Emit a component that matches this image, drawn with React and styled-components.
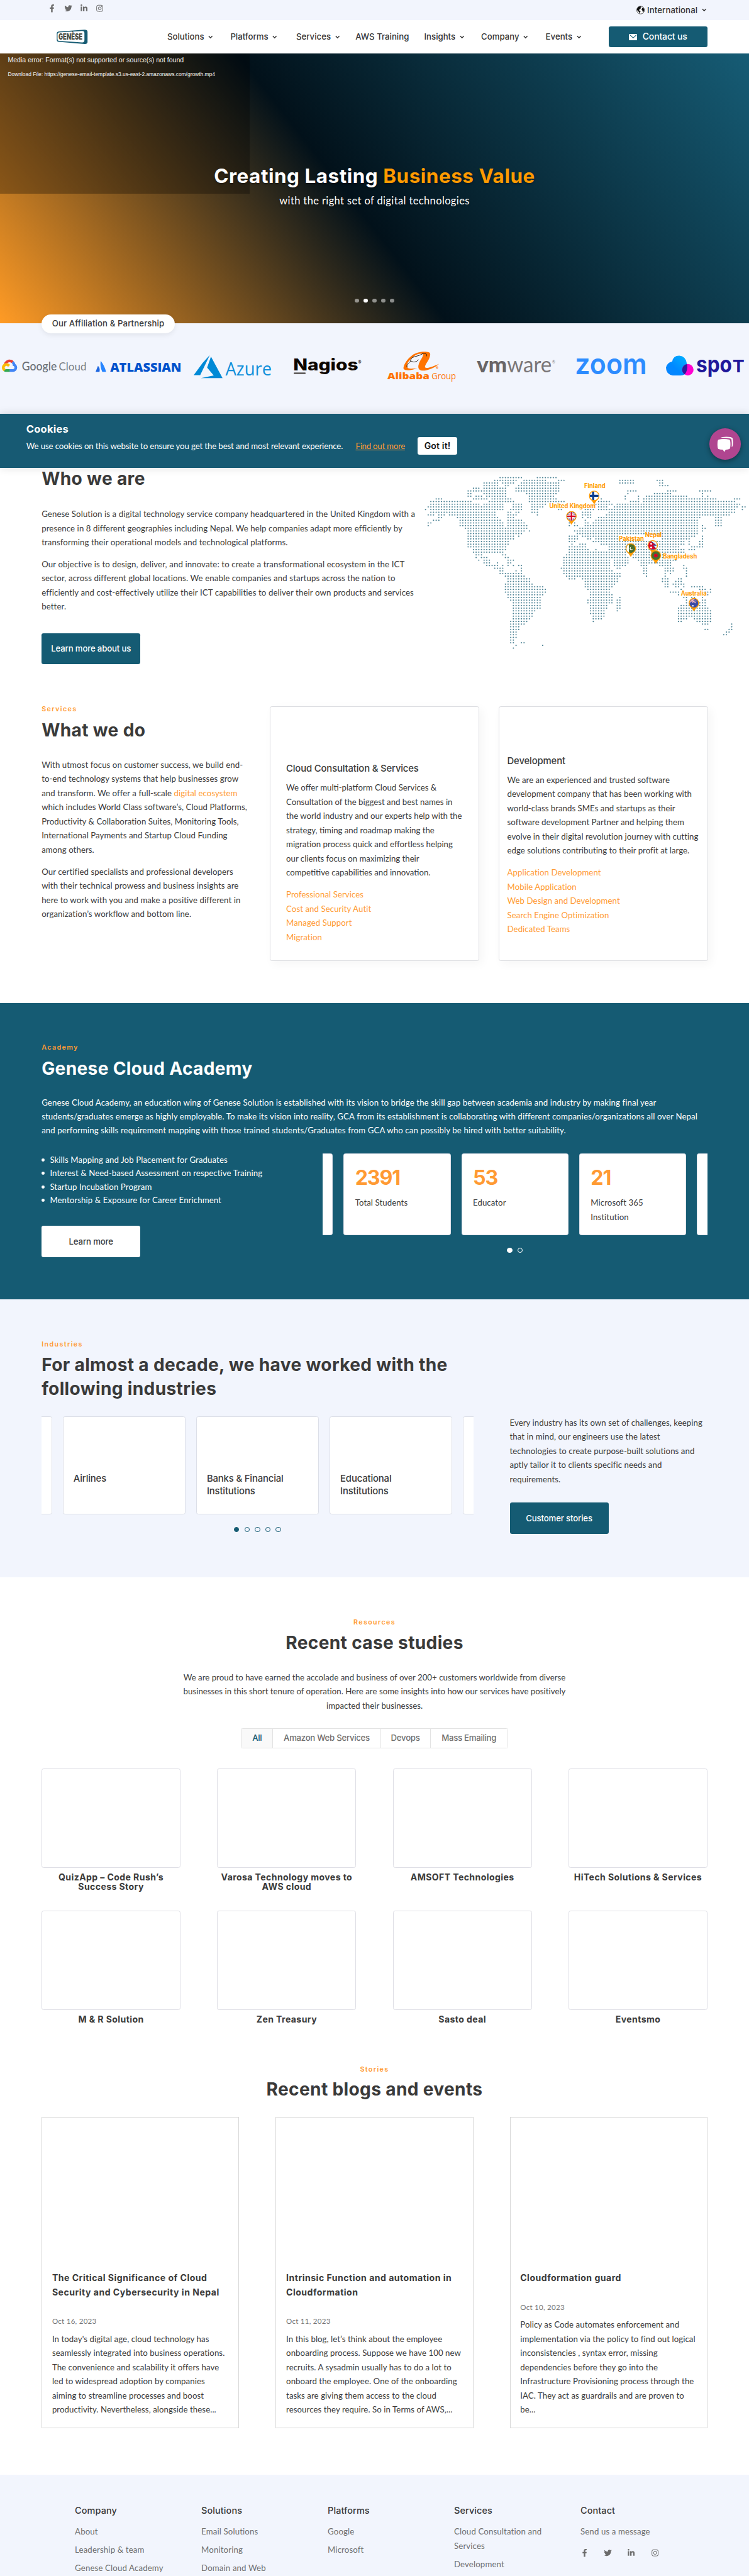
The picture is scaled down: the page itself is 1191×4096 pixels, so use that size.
import React from "react";
import styled, { createGlobalStyle, css } from "styled-components";
import { FaFacebookF, FaTwitter, FaLinkedinIn, FaInstagram } from "react-icons/fa";

const teal = "#155b73";
const orange = "#ff9a33";
const ink = "#3a3a3a";
const grey = "#6f6f6f";
const mist = "#f2f5fd";
const display = `Inter, "Liberation Sans", sans-serif`;
const text = `Lato, "Liberation Sans", sans-serif`;
const humanist = `"Open Sans", "Liberation Sans", sans-serif`;

/* 1rem is ten units of the 1440-unit wide design */
const GlobalStyle = createGlobalStyle`
  html { font-size: calc(100vw / 144); }
  *, *::before, *::after { box-sizing: border-box; }
  body { margin: 0; background: #fff; color: ${ink}; font-family: ${text}; overflow-x: hidden; }
  h1, h2, h3, p, ul { margin: 0; padding: 0; }
  ul { list-style: none; }
  svg { display: block; }
`;

const Page = styled.div`
  width: 144rem;
  height: 495.2rem;
  overflow: hidden;
`;

/* ---------- shared type ---------- */
const Body = styled.p`
  margin-top: ${(p) => p.$mt || 0}rem;
  font-size: 1.6rem;
  line-height: ${(p) => p.$lh || 2.72}rem;
  letter-spacing: ${(p) => p.$ls ?? 0.009}rem;
  white-space: pre;
  color: ${(p) => p.$color || ink};
  text-align: ${(p) => p.$align || "left"};
`;
const Accent = styled.span`
  color: ${orange};
`;
const Eyebrow = styled.div`
  font: 600 1.3rem/2rem ${display};
  letter-spacing: 0.165rem;
  color: ${orange};
`;
const Heading = styled.h2`
  margin-top: ${(p) => p.$mt || 0}rem;
  font: 700 3.4rem / ${(p) => p.$lh || 4.3}rem ${display};
  letter-spacing: 0.04rem;
  white-space: pre;
  color: ${(p) => p.$color || ink};
`;
const SubHeading = styled.h3`
  font: 500 1.8rem/2.4rem ${display};
  letter-spacing: -0.02rem;
  white-space: pre;
`;
const Button = styled.a`
  display: flex;
  align-items: center;
  justify-content: center;
  width: 19rem;
  height: 6rem;
  margin-top: ${(p) => p.$mt || 0}rem;
  border-radius: 0.4rem;
  font: 500 1.6rem/2rem ${display};
  letter-spacing: -0.02rem;
  ${(p) =>
    p.$light
      ? css`
          background: #fff;
          color: ${ink};
        `
      : css`
          background: ${teal};
          color: #fff;
        `}
`;

/* ---------- header ---------- */
const TopBar = styled.div`
  display: flex;
  justify-content: space-between;
  align-items: center;
  height: 3.9rem;
  padding: 0 8.2rem 0 9.3rem;
  background: ${mist};
`;
const Socials = styled.div`
  display: flex;
  gap: ${(p) => p.$gap}rem;
  margin: ${(p) => p.$margin};
  color: #6b6b6b;
  svg {
    width: 1.6rem;
    height: 1.5rem;
  }
`;
const Region = styled.div`
  display: flex;
  align-items: center;
  font: 500 1.6rem/2rem ${display};
  gap: 0.5rem;
  letter-spacing: 0.01rem;
  color: #333;
`;
const GlobeSvg = styled.svg`
  width: 1.6rem;
  height: 1.7rem;
`;
const Chevron = styled.svg`
  width: 0.9rem;
  height: 0.7rem;
  margin-left: ${(p) => p.$ml || 0.8}rem;
`;
const NavBar = styled.header`
  display: flex;
  align-items: center;
  height: 6.4rem;
  padding: 0 8rem 0 10.9rem;
  background: #fff;
`;
const BrandSvg = styled.svg`
  width: 6rem;
  height: 2.8rem;
  overflow: visible;
`;
const Nav = styled.nav`
  display: grid;
  grid-template-columns: 12.15rem 12.65rem 11.4rem 13.2rem 10.95rem 12.4rem auto;
  margin-left: 15.25rem;
`;
const NavLink = styled.a`
  display: flex;
  align-items: center;
  font: 500 1.6rem/2.4rem ${display};
  color: #353535;
`;
const ContactLink = styled.a`
  display: flex;
  align-items: center;
  justify-content: center;
  gap: 1rem;
  width: 19rem;
  height: 4rem;
  margin-left: auto;
  border-radius: 0.4rem;
  background: ${teal};
  color: #fff;
  font: 500 1.7rem/2rem ${display};
  letter-spacing: -0.02rem;
  svg {
    width: 1.65rem;
    height: 1.25rem;
  }
`;

/* ---------- hero ---------- */
const Hero = styled.section`
  position: relative;
  display: flex;
  flex-direction: column;
  align-items: center;
  height: 51.9rem;
  padding-top: 21.2rem;
  background: linear-gradient(52deg, #ff9b25 0%, #02111a 46.7%, #165c75 100%);
  color: #fff;
`;
const VideoError = styled.div`
  position: absolute;
  top: 0;
  left: 0;
  width: 48rem;
  height: 27rem;
  padding: 0.27rem 1.5rem;
  background: rgba(0, 0, 0, 0.3);
  font-family: "Liberation Sans", Arial, sans-serif;
  white-space: pre;
`;
const ErrorLine = styled.p`
  font-size: ${(p) => p.$size}rem;
  line-height: 2rem;
  margin-bottom: 0.77rem;
  color: #f4f4f4;
`;
const HeroTitle = styled.h1`
  position: relative;
  font: 700 3.8rem/4.6rem ${display};
  letter-spacing: 0.066rem;
  text-shadow: 0 0.2rem 0.4rem rgba(0, 0, 0, 0.3);
  em {
    font-style: normal;
    color: #ff9a00;
  }
`;
const HeroText = styled.p`
  margin-top: 1.18rem;
  font-size: 2rem;
  line-height: 2.7rem;
  letter-spacing: 0.044rem;
  text-shadow: 0 0.2rem 0.4rem rgba(0, 0, 0, 0.3);
`;
const HeroDots = styled.div`
  display: flex;
  gap: 0.95rem;
  margin-top: 17.4rem;
`;
const HeroDot = styled.span`
  width: 0.75rem;
  height: 0.75rem;
  border-radius: 50%;
  background: ${(p) => (p.$on ? "#fff" : "rgba(255,255,255,.5)")};
`;

/* ---------- partners ---------- */
const Partners = styled.section`
  height: 17.4rem;
  background: ${mist};
`;
const Pill = styled.div`
  position: relative;
  top: -1.8rem;
  width: 25.6rem;
  height: 3.7rem;
  margin-left: 8rem;
  border-radius: 1.85rem;
  background: #fff;
  box-shadow: 0 0.3rem 1rem rgba(0, 0, 0, 0.08);
  font: 500 1.6rem/3.5rem ${display};
  letter-spacing: 0.012rem;
  text-align: center;
`;
const LogoRow = styled.div`
  display: grid;
  grid-template-columns: 18rem 18.9rem 19.2rem 18rem 17.3rem 18.9rem 17.3rem 16rem;
  margin: 1.1rem 0 0 0.4rem;
`;
const LogoSvg = styled.svg`
  width: 100%;
  height: 8rem;
  overflow: visible;
`;

/* ---------- cookie bar ---------- */
const CookieBar = styled.aside`
  position: relative;
  height: 10.4rem;
  padding: 1.57rem 5.05rem;
  background: #175a73;
  color: #fff;
  box-shadow: 0 0 1.6rem rgba(0, 0, 0, 0.13);
`;
const CookieTitle = styled.h3`
  font: 700 2rem/2.8rem ${display};
  letter-spacing: 0.026rem;
`;
const CookieRow = styled.div`
  display: flex;
  align-items: center;
  margin-top: 0.1rem;
  font-size: 1.6rem;
  letter-spacing: -0.014rem;
  line-height: 3.2rem;
`;
const CookieLink = styled.a`
  margin: 0 2.45rem;
  color: ${orange};
  text-decoration: underline;
  letter-spacing: -0.03rem;
`;
const CookieButton = styled.button`
  width: 7.6rem;
  height: 3.4rem;
  padding: 0;
  border: 0;
  border-radius: 0.4rem;
  background: #fff;
  color: #111;
  font: 600 1.7rem/3.4rem ${display};
  letter-spacing: 0.02rem;
`;
const ChatButton = styled.div`
  position: absolute;
  top: 2.8rem;
  right: 1.6rem;
  display: grid;
  place-items: center;
  width: 6rem;
  height: 6rem;
  border-radius: 50%;
  background: #b04590;
  box-shadow: 0 0.3rem 1rem rgba(0, 0, 0, 0.4);
  svg {
    width: 3.2rem;
    height: 3rem;
  }
`;

/* ---------- who we are ---------- */
const Who = styled.section`
  display: flex;
  justify-content: space-between;
  height: 45.4rem;
  padding-left: 8rem;
`;
const MapSvg = styled.svg`
  width: 63rem;
  height: 36rem;
`;

/* ---------- services ---------- */
const Services = styled.section`
  display: grid;
  grid-template-columns: 43.9rem 44rem 40.1rem;
  align-items: start;
  height: 57.4rem;
  padding: 0 8rem;
`;
const ServiceCard = styled.article`
  width: 40.2rem;
  height: 49rem;
  margin-top: 0.35rem;
  padding: ${(p) => p.$pad};
  border: 1px solid #dcdde1;
  border-radius: 0.4rem;
  background: #fff;
  box-shadow: 0.6rem 0.6rem 1.8rem rgba(0, 0, 0, 0.04);
`;

/* ---------- carousels ---------- */
const Track = styled.div`
  display: flex;
  justify-content: center;
  gap: 2.05rem;
  width: ${(p) => p.$w}rem;
  overflow: hidden;
`;
const Slide = styled.div`
  flex: none;
  width: ${(p) => p.$w}rem;
  height: ${(p) => p.$h}rem;
  padding: ${(p) => p.$pad};
  border: 1px solid #dcdfe8;
  border-radius: 0.4rem;
  background: #fff;
  color: ${ink};
`;
const Count = styled.div`
  font: 700 3.9rem/4.6rem ${display};
  letter-spacing: -0.14rem;
  color: ${orange};
`;
const Pager = styled.div`
  display: flex;
  justify-content: center;
  gap: 1rem;
  margin-top: 2.4rem;
`;
const PagerDot = styled.span`
  width: 1rem;
  height: 1rem;
  border: 1px solid ${(p) => p.$c};
  border-radius: 50%;
  background: ${(p) => (p.$on ? p.$c : "transparent")};
`;

/* ---------- academy ---------- */
const Academy = styled.section`
  height: 57rem;
  padding: 7.7rem 8rem 0;
  background: ${teal};
  color: #fff;
`;
const AcademyRow = styled.div`
  display: flex;
  justify-content: space-between;
  margin-top: 3.05rem;
`;
const Bullets = styled.ul`
  font-size: 1.6rem;
  line-height: 2.6rem;
  letter-spacing: 0.012rem;
  li {
    display: flex;
    align-items: center;
    gap: 1rem;
  }
  li::before {
    content: "";
    width: 0.6rem;
    height: 0.6rem;
    border-radius: 50%;
    background: #fff;
  }
`;

/* ---------- industries ---------- */
const Industries = styled.section`
  height: 53.5rem;
  padding: 7.7rem 8rem 0;
  background: ${mist};
`;
const IndustryRow = styled.div`
  display: flex;
  gap: 7rem;
  margin-top: 2.85rem;
  & > :first-child {
    padding-top: 0.2rem;
  }
`;

/* ---------- case studies ---------- */
const Cases = styled.section`
  display: flex;
  flex-direction: column;
  align-items: center;
  padding: 7.73rem 8rem 0;
`;
const Tabs = styled.div`
  display: flex;
  height: 3.8rem;
  margin-top: 3.02rem;
  border: 1px solid #e3e3e3;
  border-radius: 0.3rem;
`;
const Tab = styled.div`
  width: ${(p) => p.$w}rem;
  font: 500 1.6rem/3.6rem ${display};
  letter-spacing: -0.035rem;
  text-align: center;
  color: ${(p) => (p.$on ? teal : grey)};
  background: ${(p) => (p.$on ? "#f9f9f9" : "#fff")};
  & + & {
    border-left: 1px solid #e3e3e3;
  }
`;
const CaseGrid = styled.div`
  display: grid;
  grid-template-columns: repeat(4, 26.7rem);
  grid-auto-rows: 27.3rem;
  column-gap: 7.07rem;
  margin-top: 3.95rem;
`;
const CaseFrame = styled.div`
  height: 19.1rem;
  border: 1px solid #dfdfe6;
  border-radius: 0.4rem;
`;
const CaseTitle = styled.h3`
  margin-top: 0.8rem;
  font: 700 1.7rem/1.85rem ${display};
  letter-spacing: 0.05rem;
  white-space: pre;
  text-align: center;
`;

/* ---------- blog ---------- */
const Blog = styled.section`
  display: flex;
  flex-direction: column;
  align-items: center;
  padding: 2.25rem 8rem 8.97rem;
`;
const PostGrid = styled.div`
  display: grid;
  grid-template-columns: repeat(3, 38rem);
  gap: 7rem;
  margin-top: 3.05rem;
`;
const Post = styled.article`
  height: 59.8rem;
  padding: 29.5rem 1.9rem 0;
  border: 1px solid #d9d9d9;
`;
const PostTitle = styled.h3`
  font: 700 1.7rem/2.72rem ${display};
  letter-spacing: 0.06rem;
  white-space: pre;
`;
const PostDate = styled.div`
  margin: 3.26rem 0 1rem;
  font-size: 1.4rem;
  line-height: 2rem;
  letter-spacing: 0.03rem;
  color: #757575;
`;

/* ---------- footer ---------- */
const Footer = styled.footer`
  display: grid;
  grid-template-columns: repeat(5, 24.3rem);
  height: 19.6rem;
  padding: 5.65rem 0 0 14.4rem;
  background: ${mist};
`;
const FooterTitle = styled.h3`
  margin-bottom: 1.56rem;
  font: 500 1.75rem/2.4rem ${display};
  letter-spacing: 0.01rem;
`;
const FooterLink = styled.a`
  display: block;
  margin-bottom: 0.76rem;
  font-size: 1.6rem;
  line-height: 2.72rem;
  letter-spacing: 0.017rem;
  white-space: pre;
  color: ${grey};
`;

/* ---------- drawings ---------- */
const Down = ({ ml }) => (
  <Chevron viewBox="0 0 9 7" $ml={ml} aria-hidden="true">
    <path d="M1 1.4 4.500 5 8 1.400" fill="none" stroke="#333" strokeWidth="1.700" />
  </Chevron>
);
const Globe = () => (
  <GlobeSvg viewBox="0 0 16 17">
    <circle cx="8" cy="8.500" r="7.400" fill="#fff" stroke="#222" strokeWidth=".9" />
    <path d="M1 8C1 4 4 1.300 8 1.200L9.500 3 7.500 4.500 8.300 6 5.600 7.200 5 9 8 10.500 7 13.200 6 15.500 5 12 2.800 10.500Z" fill="#111" />
    <path d="M11 4.500 13.500 4 15.200 8 14 11.500 12.200 12.500 11.500 9.500 9.800 8Z" fill="#111" />
  </GlobeSvg>
);
const Envelope = () => (
  <svg viewBox="0 0 17 13">
    <rect width="17" height="13" rx="1" fill="#fff" />
    <path d="M1.500 1.500 8.500 8 15.500 1.500" fill="none" stroke={teal} strokeWidth="1.300" />
  </svg>
);
const Word = ({ x, y, w, size, weight = 700, fill, family = text, children }) => (
  <text x={x} y={y} textLength={w} lengthAdjust="spacingAndGlyphs" fontFamily={family} fontSize={size} fontWeight={weight} fill={fill}>
    {children}
  </text>
);
const Brand = () => (
  <BrandSvg viewBox="0 0 60 28">
    <path d="M3 4 53 .3Q59.500 0 59.500 4.500V24Q59.500 28 54 27.700L4 23.600Q.3 23 .3 19.500V8Q.3 4.500 3 4Z" fill={teal} />
    <path d="M4.500 5.500 49 2.800Q53.500 2.800 53.500 6.500V20.500Q53.500 25 49 24.700L4.500 21.800Q1.800 21.500 1.800 18.500V8.500Q1.800 5.800 4.500 5.500Z" fill="#fff" />
    <Word x="3.600" y="19.700" w="46" size="15.500" weight="900" fill="#4a4b40" family={display}>GENÈSE</Word>
  </BrandSvg>
);

const spotBlob = "M13 52Q0 50 0 37 1 28 12 25 14 14 25.500 14 38 15 40 29 43 41 36 50 33 52 28 52Z";
const Logos = () => (
  <LogoRow>
    <LogoSvg viewBox="0 0 180 80">
      <g transform="translate(-1.400 18) scale(.251)">
        <path fill="#ea4335" d="M80.600 40.300h.4l-.2-.2 14-14v-.3c-11.800-10.400-28.100-14-43.200-9.500C36.500 20.800 24.900 32.800 20.700 48c.2-.1.5-.2.8-.2 5.200-3.400 11.400-5.400 17.900-5.400 2.200 0 4.300.2 6.400.6.1-.1.2-.1.3-.1 9-9.900 24.200-11.100 34.600-2.600h-.1z" />
        <path fill="#4285f4" d="M108.100 47.800c-2.300-8.500-7.100-16.200-13.800-22.100L80 39.900c6 4.900 9.500 12.300 9.300 20v2.500c16.900 0 16.900 25.200 0 25.200H63.900v20.200h25.400c14.600.1 27.500-9.300 31.800-23.100 4.300-13.800-1-28.800-13-36.900z" />
        <path fill="#34a853" d="M39 107.900h26.300V87.700H39c-1.900 0-3.700-.4-5.400-1.100l-15.200 14.600v.2c6 4.300 13.200 6.600 20.700 6.600z" />
        <path fill="#fbbc05" d="M40.200 41.900c-14.900.1-28.100 9.300-32.900 22.800-4.800 13.600 0 28.500 11.800 37.300l15.600-14.900c-8.600-3.700-10.600-14.500-4-20.800 6.600-6.400 17.800-4.400 21.700 3.800L68 55.200C61.400 46.900 51.100 42 40.200 42.100z" />
      </g>
      <Word x="38.500" y="42.300" w="67" size="22" weight="500" fill="#6b7076">Google</Word>
      <Word x="109.500" y="42.300" w="53" size="22" weight="400" fill="#7b8085">Cloud</Word>
    </LogoSvg>
    <LogoSvg viewBox="0 0 189 80">
      <path d="M9.800 24Q17 33 20.200 45H12.800Q8 34 9.800 24Z" fill="#2684ff" />
      <path d="M4.600 33.500Q9.200 38 7.600 45H0Z" fill="#1d66e0" />
      <Word x="28" y="44.700" w="137" size="22.500" weight="800" fill="#0052cc" family={humanist}>ATLASSIAN</Word>
    </LogoSvg>
    <LogoSvg viewBox="0 0 192 80">
      <path d="M31 12.800 17 28 0 51.500H12.500Z" fill="#0089d6" />
      <path d="M33.200 15.800 55.500 57H14L38.500 52 25.800 37Z" fill="#0089d6" />
      <Word x="61" y="51.700" w="89" size="35" weight="400" fill="#0f8fda" family={humanist}>Azure</Word>
    </LogoSvg>
    <LogoSvg viewBox="0 0 180 80">
      <Word x="-1" y="42.700" w="125" size="31" weight="800" fill="#0d0600" family={display}>Nagios</Word>
      <rect x="0" y="46.500" width="23" height="2" rx="1" fill="#0d0600" />
      <Word x="124" y="29" w="6" size="8" fill="#0d0600">®</Word>
    </LogoSvg>
    <LogoSvg viewBox="0 0 173 80">
      <path d="M43.500 37.500C36 36 37 29 42 24 48 17 56 9 66 10.500 66 15 62 24 60 31 58.500 37 60 41.500 66 42.500 76 43.500 90 38 99.500 29.500 90 33.500 80 38 74.500 37.500 70 37 73 32 78 24 82 17 84.500 9 80 7.500 72 5.500 58 6 48 13 38 20 30 33 31 39 33 43.500 48 43 57 37.500 52 39 47 39.500 43.500 37.500Z" fill="#ff7300" />
      <path d="M60 30C63 22 69 17 68.500 10.500 64 10.500 60 13 50 16.500 46 18 48 22 45 25 42 28 37 31 38.500 37 41 40 50 39 57 37.500Z" fill={mist} />
      <path d="M38 36.500C36 32 40 29 43 26.500 46 24 44 20 48 17.500 54 15 64 13.500 69 9.500 75 9 76 12 75.500 15M44.500 23.500C49 27.500 56 27 59.500 21.500" fill="none" stroke="#1b130c" strokeWidth="1.200" />
      <Word x="0" y="58.800" w="81" size="17" weight="800" fill="#ff7300" family={humanist}>Alibaba</Word>
      <Word x="85" y="58.800" w="47" size="17" weight="400" fill="#ff7300" family={humanist}>Group</Word>
      <Word x="93" y="40" w="5" size="6" fill="#ff7300">®</Word>
    </LogoSvg>
    <LogoSvg viewBox="0 0 189 80">
      <Word x="-1" y="45.500" w="58" size="42" weight="900" fill="#696566">vm</Word>
      <Word x="57" y="45.500" w="86" size="42" weight="400" fill="#7a7677">ware</Word>
      <Word x="144" y="29" w="6" size="8" weight="400" fill="#7a7677">®</Word>
    </LogoSvg>
    <LogoSvg viewBox="0 0 173 80">
      <Word x="-2" y="50" w="138" size="56" weight="600" fill="#2d8cff" family={display}>zoom</Word>
    </LogoSvg>
    <LogoSvg viewBox="0 0 160 80">
      <defs>
        <linearGradient id="spotBlue" x1="1" y1="0" x2="0" y2="1">
          <stop offset="0" stopColor="#00b4ff" />
          <stop offset=".6" stopColor="#0088ff" />
          <stop offset="1" stopColor="#0a84ff" />
        </linearGradient>
        <clipPath id="spotClip">
          <circle cx="42" cy="41" r="11" />
        </clipPath>
      </defs>
      <path d={spotBlob} fill="url(#spotBlue)" />
      <circle cx="42" cy="41" r="11" fill="#ff00d0" />
      <path clipPath="url(#spotClip)" d={spotBlob} fill="#2a1a9c" />
      <Word x="58" y="46" w="69" size="44" weight="700" fill="#21189a" family={display}>spo</Word>
      <Word x="128" y="46" w="23" size="33" weight="700" fill="#21189a" family={display}>T</Word>
    </LogoSvg>
  </LogoRow>
);

const ChatIcon = () => (
  <svg viewBox="0 0 32 30">
    <path d="M7 2.500Q9 .5 18 .5 28 .5 30 3 31.500 8 30.500 17 30 20 28.500 20.500 29 8 27.500 4.500 22 2.500 7 2.500Z" fill="#fff" />
    <path d="M3 6Q13 3.500 24 6 26 7 26 14.500 26 23 24 24.300 20 25.500 17 25.500L14 30 11.500 25.500Q6 25.500 3 24.300 1 23 1 15 1 7 3 6Z" fill="#fff" />
  </svg>
);

/* land areas of the dotted map: one entry per row, from-to spans across */
const LAND = [
  "376-480 555-645",
  "350-454 490-594 656-682 950-1015 1128-1154",
  "299-364 388-440 478-658 950-1015 1141-1154",
  "299-364 401-415 465-658 1141-1179",
  "248-276 299-403 452-658",
  "223-403 452-658 988-1027 1179-1217 1332-1383",
  "223-236 299-403 503-645 988 1116-1192 1345",
  "223-236 261-287 312-403 516-632 975 1039 1077-1268 1345 1370",
  "70-96 248-312 338-428 516-645 860 975 1039 1065-1408 1498-1523",
  "44-236 325-440 516-630 643-682 848-900 1000-1039 1065-1500",
  "44-275 299-390 439-478 528-594 835-911 937-1510 1523",
  "32-388 439-478 528-581 848-886 924-1510 1535-1548",
  "20 44-390 426-478 528-555 656-670 784-822 848-900 911-1498 1535",
  "44-350 414-428 452-465 528-555 771-809 899-1498",
  "32-58 83-96 109 134-350 414-454 555 771-809 886-1421 1434-1472",
  "83-96 172-364 414-440 771 797-809 848-1332 1408-1434",
  "58-83 185-376 414-478 784 835-1319 1408-1434",
  "32-45 185-390 414-490 707 733 784-797 822-1319 1408-1434",
  "32 185-390 414-503 707 733-746 784-1319 1345 1408-1434",
  "210-390 401-503 758-1319 1345-1357",
  "223-490 516 733-1319 1345",
  "223-478 746-1319",
  "223-440 465 707-746 771-940 1160-1306 1345",
  "223-440 707-746 797-809 835-940 1160-1280 1345",
  "223-415 707-733 822-1255 1280 1332-1345",
  "223-415 720 758-784 860-1255 1280 1332-1345",
  "223-403 707-784 899-1230 1293-1345",
  "248-403 707-797 835 899-1255 1280-1306",
  "248-390 707-886 899-1255",
  "261 274-287 388-401 695-911 924-975 1000-1150",
  "261 287-312 401-414 682-911 924-988 1014-1150",
  "274 299-325 414-440 682-899 924-988 1039-1217",
  "299-325 363 414-428 682-899 924-988 1052-1192",
  "312-363 388 414 440 465-478 682-899 924-975 1052-1077 1141-1192 1255",
  "350-388 478 669-899 937-950 1065-1077 1166-1204 1255-1268",
  "376-388 452 478 682-911 1065-1077 1166 1179-1204 1268",
  "376-478 682-950 1065-1077 1166 1192 1268",
  "401-490 695-950 1077 1166 1268",
  "414-516 707-733 771-937 1154-1179 1230-1243",
  "414-516 784-937 1154-1179 1217-1243",
  "401-529 784-924 1166-1179 1204-1255",
  "401-583 784-911 1166-1179 1217-1230 1255 1293-1345",
  "401-594 797-899 1243 1332-1357 1383",
  "401-594 809-899 1192-1230 1357-1383",
  "414-581 809-911 1230 1370",
  "414-570 809-911 950 1255-1268 1293-1306 1345",
  "426-570 797-911 937-950 1268 1345-1357",
  "439-570 797-911 937-950 1268 1332-1357",
  "439-570 809-886 937-950 1243-1280 1332-1357",
  "439-570 809-886 937-950 1230-1370",
  "439-542 809-873 937 1230-1383",
  "439-529 809-873 1230-1383",
  "439-529 822-873 1230-1383",
  "439-516 822-860 1230-1268 1306-1383",
  "426-503 822 1230-1243 1319-1383",
  "426-490 1345-1370 1485",
  "426-465 1485",
  "426-465 1357-1370 1472-1485",
  "426-452 1459-1472",
  "426-452 1446-1459",
  "426-452",
  "426-440",
  "426-440 478-490",
  "452 580",
  "440",
];
const column = (v) => Math.round((Number(v) - 20) / 12.74);
const dots = LAND.flatMap((row, r) =>
  row.split(" ").flatMap((span) => {
    const [a, b = a] = span.split("-");
    const from = column(a);
    return Array.from({ length: column(b) - from + 1 }, (_, i) => [8.04 + 5.119 * (from + i), 18.7 + 5.12 * r]);
  })
);
const Pin = ({ x, y, id, children }) => (
  <g transform={`translate(${x} ${y})`}>
    <clipPath id={id}>
      <circle r="8.400" />
    </clipPath>
    <path d="M-9 4.500Q-4 9 0 16 4 9 9 4.500Z" fill="#ff9a00" />
    <circle r="10" fill="#ff9a00" />
    <g clipPath={`url(#${id})`}>{children}</g>
  </g>
);
const places = [
  ["Finland", 313, 38.3, 41],
  ["United Kingdom", 246, 77.3, 89],
  ["Nepal", 430, 133, 32],
  ["Pakistan", 380, 140.6, 48],
  ["Bangladesh", 464.5, 174.5, 65.5],
  ["Australia", 499, 246, 49.5],
];
const WorldMap = () => (
  <MapSvg viewBox="0 0 630 360">
    {dots.map(([x, y], i) => (
      <circle key={i} cx={x} cy={y} r="1.250" fill="#4a8193" />
    ))}
    <Pin x={332.3} y={53.7} id="fi">
      <rect x="-10" y="-10" width="20" height="20" fill="#fff" />
      <path d="M-10 0H10M-2 -10V10" stroke="#0b3c8c" strokeWidth="4" />
    </Pin>
    <Pin x={288.5} y={93} id="uk">
      <rect x="-10" y="-10" width="20" height="20" fill="#1f4fa0" />
      <path d="M-10 -10 10 10M-10 10 10 -10" stroke="#fff" strokeWidth="3" />
      <path d="M-10 -10 10 10M-10 10 10 -10" stroke="#d80027" strokeWidth="1" />
      <path d="M-10 0H10M0 -10V10" stroke="#fff" strokeWidth="5" />
      <path d="M-10 0H10M0 -10V10" stroke="#d80027" strokeWidth="2.600" />
    </Pin>
    <Pin x={402.6} y={155} id="pk">
      <rect x="-10" y="-10" width="20" height="20" fill="#496e2d" />
      <rect x="-10" y="-10" width="6.500" height="20" fill="#fff" />
      <circle cx="1" cy="0" r="3" fill="#fff" />
      <circle cx="2" cy="-.8" r="2.500" fill="#496e2d" />
    </Pin>
    <Pin x={444.8} y={149} id="np">
      <rect x="-10" y="-10" width="20" height="20" fill="#eef2fb" />
      <path d="M-6 -10 7 0H1L8 8H-10V-10Z" fill="#d80027" stroke="#1f4fa0" strokeWidth="1.200" />
      <circle cx="-3" cy="-3" r="1.700" fill="#fff" />
      <circle cx="-3" cy="4" r="1.900" fill="#fff" />
    </Pin>
    <Pin x={450.8} y={168.5} id="bd">
      <rect x="-10" y="-10" width="20" height="20" fill="#496e2d" />
      <circle r="3.600" fill="#d80027" />
    </Pin>
    <Pin x={524} y={260} id="au">
      <rect x="-10" y="-10" width="20" height="20" fill="#3a4aa5" />
      <path d="M-10 -10 4 0M-10 0 4 -10M-2 -10V0M-10 -4H5" stroke="#f3b6c0" strokeWidth="1.500" />
      <circle cx="-2" cy="5" r="1.500" fill="#fff" />
    </Pin>
    {places.map(([name, x, y, w]) => (
      <Word key={name} x={x} y={y} w={w} size="11.800" fill="#ff9a00" family={display}>{name}</Word>
    ))}
  </MapSvg>
);

const SocialIcons = (props) => (
  <Socials {...props}>
    <FaFacebookF />
    <FaTwitter />
    <FaLinkedinIn />
    <FaInstagram />
  </Socials>
);

/* ---------- content ---------- */
const navItems = ["Solutions", "Platforms", "Services", "AWS Training", "Insights", "Company", "Events"];
const stats = [["", ""], ["2391", "Total Students"], ["53", "Educator"], ["21", "Microsoft 365\nInstitution"], ["", ""]];
const industries = ["", "Airlines", "Banks & Financial\nInstitutions", "Educational\nInstitutions", ""];
const tabs = [["All", 5.95], ["Amazon Web Services", 20.7], ["Devops", 9.55], ["Mass Emailing", 14.9]];
const cases = [
  "QuizApp – Code Rush’s\nSuccess Story",
  "Varosa Technology moves to\nAWS cloud",
  "AMSOFT Technologies",
  "HiTech Solutions & Services",
  "M & R Solution",
  "Zen Treasury",
  "Sasto deal",
  "Eventsmo",
];
const posts = [
  {
    title: "The Critical Significance of Cloud\nSecurity and Cybersecurity in Nepal",
    date: "Oct 16, 2023",
    body: "In today's digital age, cloud technology has\nseamlessly integrated into business operations.\nThe convenience and scalability it offers have\nled to widespread adoption by companies\naiming to streamline processes and boost\nproductivity. Nevertheless, alongside these...",
  },
  {
    title: "Intrinsic Function and automation in\nCloudformation",
    date: "Oct 11, 2023",
    body: "In this blog, let’s think about the employee\nonboarding process. Suppose we have 100 new\nrecruits. A sysadmin usually has to do a lot to\nonboard the employee. One of the onboarding\ntasks are giving them access to the cloud\nresources they require. So in Terms of AWS,...",
  },
  {
    title: "Cloudformation guard",
    date: "Oct 10, 2023",
    body: "Policy as Code automates enforcement and\nimplementation via the policy to find out logical\ninconsistencies , syntax error, missing\ndependencies before they go into the\nInfrastructure Provisioning process through the\nIAC. They act as guardrails and are proven to\nbe...",
  },
];
const footer = [
  ["Company", ["About", "Leadership & team", "Genese Cloud Academy"]],
  ["Solutions", ["Email Solutions", "Monitoring", "Domain and Web"]],
  ["Platforms", ["Google", "Microsoft"]],
  ["Services", ["Cloud Consultation and\nServices", "Development"]],
];

export default function App() {
  return (
    <Page>
      <GlobalStyle />
      <TopBar>
        <SocialIcons $gap={1.48} $margin="0 0 .6rem -.1rem" />
        <Region>
          <Globe />
          International
          <Down ml={0.3} />
        </Region>
      </TopBar>
      <NavBar>
        <Brand />
        <Nav>
          {navItems.map((item) => (
            <NavLink key={item}>
              {item}
              {item !== "AWS Training" && <Down />}
            </NavLink>
          ))}
        </Nav>
        <ContactLink>
          <Envelope />
          Contact us
        </ContactLink>
      </NavBar>

      <Hero>
        <VideoError>
          <ErrorLine $size={1.28}>Media error: Format(s) not supported or source(s) not found</ErrorLine>
          <ErrorLine $size={1.02}>Download File: https://genese-email-template.s3.us-east-2.amazonaws.com/growth.mp4</ErrorLine>
        </VideoError>
        <HeroTitle>
          Creating Lasting <em>Business Value</em>
        </HeroTitle>
        <HeroText>with the right set of digital technologies</HeroText>
        <HeroDots>
          {[0, 1, 2, 3, 4].map((i) => (
            <HeroDot key={i} $on={i === 1} />
          ))}
        </HeroDots>
      </Hero>

      <Partners>
        <Pill>Our Affiliation & Partnership</Pill>
        <Logos />
      </Partners>

      <CookieBar>
        <CookieTitle>Cookies</CookieTitle>
        <CookieRow>
          We use cookies on this website to ensure you get the best and most relevant experience.
          <CookieLink>Find out more</CookieLink>
          <CookieButton>Got it!</CookieButton>
        </CookieRow>
        <ChatButton>
          <ChatIcon />
        </ChatButton>
      </CookieBar>

      <Who>
        <div>
          <Heading>Who we are</Heading>
          <Body $mt={3.19} $ls={0.012}>
            {"Genese Solution is a digital technology service company headquartered in the United Kingdom with a\npresence in 8 different geographies including Nepal. We help companies adapt more efficiently by\ntransforming their operational models and technological platforms."}
          </Body>
          <Body $mt={1.47} $ls={0.014}>
            {"Our objective is to design, deliver, and innovate: to create a transformational ecosystem in the ICT\nsector, across different global locations. We enable companies and startups across the nation to\nefficiently and cost-effectively utilize their ICT capabilities to deliver their own products and services\nbetter."}
          </Body>
          <Button $mt={3.7}>Learn more about us</Button>
        </div>
        <WorldMap />
      </Who>

      <Services>
        <div>
          <Eyebrow>Services</Eyebrow>
          <Heading $mt={0.92}>What we do</Heading>
          <Body $mt={3.05}>
            {"With utmost focus on customer success, we build end-\nto-end technology systems that help businesses grow\nand transform. We offer a full-scale "}
            <Accent>digital ecosystem</Accent>
            {"\nwhich includes World Class software’s, Cloud Platforms,\nProductivity & Collaboration Suites, Monitoring Tools,\nInternational Payments and Startup Cloud Funding\namong others."}
          </Body>
          <Body $mt={1.52}>
            {"Our certified specialists and professional developers\nwith their technical prowess and business insights are\nhere to work with you and make a positive different in\norganization’s workflow and bottom line."}
          </Body>
        </div>
        <ServiceCard $pad="10.8rem 0 0 3rem">
          <SubHeading>Cloud Consultation & Services</SubHeading>
          <Body $mt={1.02} $ls={0}>
            {"We offer multi-platform Cloud Services &\nConsultation of the biggest and best names in\nthe world industry and our experts help with the\nstrategy, timing and roadmap making the\nmigration process quick and effortless helping\nour clients focus on maximizing their\ncompetitive capabilities and innovation."}
          </Body>
          <Body $mt={1.52} $color={orange}>
            {"Professional Services\nCost and Security Autit\nManaged Support\nMigration"}
          </Body>
        </ServiceCard>
        <ServiceCard $pad="9.3rem 0 0 1.5rem">
          <SubHeading>Development</SubHeading>
          <Body $mt={1.02} $ls={0.004}>
            {"We are an experienced and trusted software\ndevelopment company that has been working with\nworld-class brands SMEs and startups as their\nsoftware development Partner and helping them\nevolve in their digital revolution journey with cutting\nedge solutions contributing to their profit at large."}
          </Body>
          <Body $mt={1.52} $color={orange}>
            {"Application Development\nMobile Application\nWeb Design and Development\nSearch Engine Optimization\nDedicated Teams"}
          </Body>
        </ServiceCard>
      </Services>

      <Academy>
        <Eyebrow>Academy</Eyebrow>
        <Heading $mt={0.82} $color="#fff">
          Genese Cloud Academy
        </Heading>
        <Body $mt={2.96} $lh={2.69} $ls={0.0135} $color="#fff">
          {"Genese Cloud Academy, an education wing of Genese Solution is established with its vision to bridge the skill gap between academia and industry by making final year\nstudents/graduates emerge as highly employable. To make its vision into reality, GCA from its establishment is collaborating with different companies/organizations all over Nepal\nand performing skills requirement mapping with those trained students/Graduates from GCA who can possibly be hired with better suitability."}
        </Body>
        <AcademyRow>
          <div>
            <Bullets>
              <li>Skills Mapping and Job Placement for Graduates</li>
              <li>Interest & Need-based Assessment on respective Training</li>
              <li>Startup Incubation Program</li>
              <li>Mentorship & Exposure for Career Enrichment</li>
            </Bullets>
            <Button $light $mt={3.6}>
              Learn more
            </Button>
          </div>
          <div>
            <Track $w={74}>
              {stats.map(([n, label], i) => (
                <Slide key={i} $w={20.6} $h={15.8} $pad="2.3rem 0 0 2.1rem">
                  <Count>{n}</Count>
                  <Body $mt={1.15}>{label}</Body>
                </Slide>
              ))}
            </Track>
            <Pager>
              <PagerDot $c="#fff" $on />
              <PagerDot $c="#fff" />
            </Pager>
          </div>
        </AcademyRow>
      </Academy>

      <Industries>
        <Eyebrow>Industries</Eyebrow>
        <Heading $mt={0.57} $lh={4.6}>
          {"For almost a decade, we have worked with the\nfollowing industries"}
        </Heading>
        <IndustryRow>
          <div>
            <Track $w={83}>
              {industries.map((name, i) => (
                <Slide key={i} $w={23.6} $h={18.8} $pad="10.7rem 0 0 1.95rem">
                  <SubHeading>{name}</SubHeading>
                </Slide>
              ))}
            </Track>
            <Pager>
              {[0, 1, 2, 3, 4].map((i) => (
                <PagerDot key={i} $c={teal} $on={i === 0} />
              ))}
            </Pager>
          </div>
          <div>
            <Body>
              {"Every industry has its own set of challenges, keeping\nthat in mind, our engineers use the latest\ntechnologies to create purpose-built solutions and\naptly tailor it to clients specific needs and\nrequirements."}
            </Body>
            <Button $mt={3.18}>Customer stories</Button>
          </div>
        </IndustryRow>
      </Industries>

      <Cases>
        <Eyebrow>Resources</Eyebrow>
        <Heading $mt={0.68}>Recent case studies</Heading>
        <Body $mt={3.11} $align="center" $ls={0.004}>
          {"We are proud to have earned the accolade and business of over 200+ customers worldwide from diverse\nbusinesses in this short tenure of operation. Here are some insights into how our services have positively\nimpacted their businesses."}
        </Body>
        <Tabs>
          {tabs.map(([name, w], i) => (
            <Tab key={name} $w={w} $on={i === 0}>
              {name}
            </Tab>
          ))}
        </Tabs>
        <CaseGrid>
          {cases.map((name) => (
            <div key={name}>
              <CaseFrame />
              <CaseTitle>{name}</CaseTitle>
            </div>
          ))}
        </CaseGrid>
      </Cases>

      <Blog>
        <Eyebrow>Stories</Eyebrow>
        <Heading $mt={0.76}>Recent blogs and events</Heading>
        <PostGrid>
          {posts.map((p) => (
            <Post key={p.title}>
              <PostTitle>{p.title}</PostTitle>
              <PostDate>{p.date}</PostDate>
              <Body>{p.body}</Body>
            </Post>
          ))}
        </PostGrid>
      </Blog>

      <Footer>
        {footer.map(([title, links]) => (
          <div key={title}>
            <FooterTitle>{title}</FooterTitle>
            {links.map((l) => (
              <FooterLink key={l}>{l}</FooterLink>
            ))}
          </div>
        ))}
        <div>
          <FooterTitle>Contact</FooterTitle>
          <FooterLink>Send us a message</FooterLink>
          <SocialIcons $gap={2.9} $margin="2rem 0 0" />
        </div>
      </Footer>
    </Page>
  );
}
